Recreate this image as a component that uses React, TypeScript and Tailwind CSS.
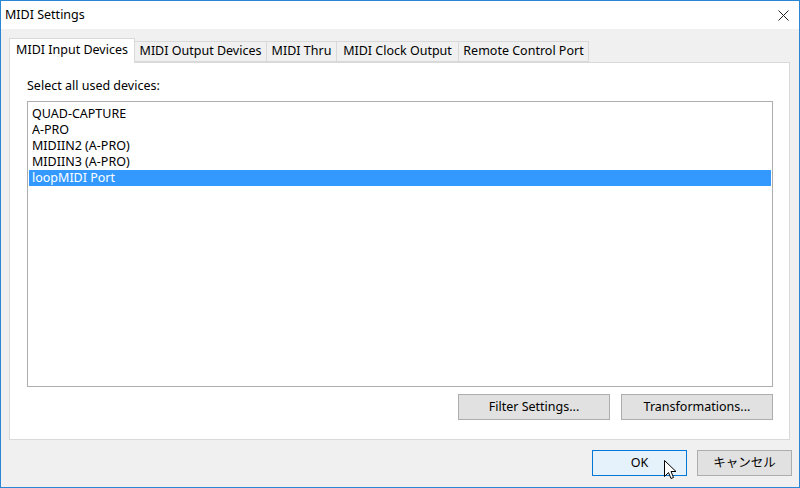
const devices = ['QUAD-CAPTURE', 'A-PRO', 'MIDIIN2 (A-PRO)', 'MIDIIN3 (A-PRO)', 'loopMIDI Port'];

const tabs = [
  { label: 'MIDI Input Devices', w: 'w-[126px]' },
  { label: 'MIDI Output Devices', w: 'w-[132px]' },
  { label: 'MIDI Thru', w: 'w-[70px]' },
  { label: 'MIDI Clock Output', w: 'w-[122px]' },
  { label: 'Remote Control Port', w: 'w-[130px]' },
];

export default function App() {
  return (
    <div
      className="w-[800px] h-[488px] bg-[#f0f0f0] border border-[#2b87d6] flex flex-col text-[12.5px] text-black overflow-hidden relative"
      style={{ fontFamily: "'Noto Sans', 'Noto Sans CJK JP', sans-serif" }}
    >
      {/* Title bar */}
      <div className="h-[28px] bg-white flex items-center justify-between pl-[4px] pr-[10px] shrink-0">
        <span>MIDI Settings</span>
        <svg width="11" height="11" viewBox="0 0 11 11">
          <path d="M0.5 0.5 L10.5 10.5 M10.5 0.5 L0.5 10.5" stroke="#222" strokeWidth="1" />
        </svg>
      </div>

      {/* Tabs */}
      <div className="flex items-end pl-[8px] pt-[8px] h-[33px] shrink-0">
        {tabs.map((t, i) =>
          i === 0 ? (
            <div
              key={t.label}
              className={`${t.w} h-[25px] bg-white border border-b-0 border-[#d9d9d9] flex items-start justify-center pt-[2px] relative z-10 -mb-px`}
            >
              {t.label}
            </div>
          ) : (
            <div
              key={t.label}
              className={`${t.w} h-[21px] bg-[#f0f0f0] border border-l-0 border-[#d9d9d9] flex items-center justify-center`}
            >
              {t.label}
            </div>
          )
        )}
      </div>

      {/* Panel */}
      <div className="ml-[8px] w-[781px] h-[378px] bg-white border border-[#d9d9d9] flex flex-col pl-[17px] pr-[16px] shrink-0">
        <div className="h-[38px] flex items-center pt-[9px]">Select all used devices:</div>
        <div className="h-[286px] border border-[#adadad] bg-white pt-[4px] px-[1px]">
          {devices.map((d, i) => (
            <div
              key={d}
              className={`h-[16px] leading-[16px] pl-[3px] ${
                i === devices.length - 1 ? 'bg-[#3399ff] text-white' : ''
              }`}
            >
              {d}
            </div>
          ))}
        </div>
        <div className="flex justify-end gap-[11px] mt-[7px]">
          <button className="w-[152px] h-[26px] bg-[#e1e1e1] border border-[#adadad]">
            Filter Settings...
          </button>
          <button className="w-[152px] h-[26px] bg-[#e1e1e1] border border-[#adadad]">
            Transformations...
          </button>
        </div>
      </div>

      {/* Footer buttons */}
      <div className="flex justify-end gap-[10px] pr-[7px] pt-[10px]">
        <button className="w-[95px] h-[26px] bg-[#e5f1fb] border border-[#0078d7]">OK</button>
        <button className="w-[95px] h-[26px] bg-[#e1e1e1] border border-[#adadad]">キャンセル</button>
      </div>

      {/* Mouse cursor */}
      <svg className="absolute left-[663px] top-[459px]" width="13" height="21" viewBox="0 0 13 21">
        <path
          d="M0.5 0.5 L0.5 16.5 L4.5 12.5 L7 18.5 L9.5 17.5 L7 11.5 L12 11.5 Z"
          fill="white"
          stroke="black"
          strokeWidth="1"
          strokeLinejoin="miter"
        />
      </svg>
    </div>
  );
}
